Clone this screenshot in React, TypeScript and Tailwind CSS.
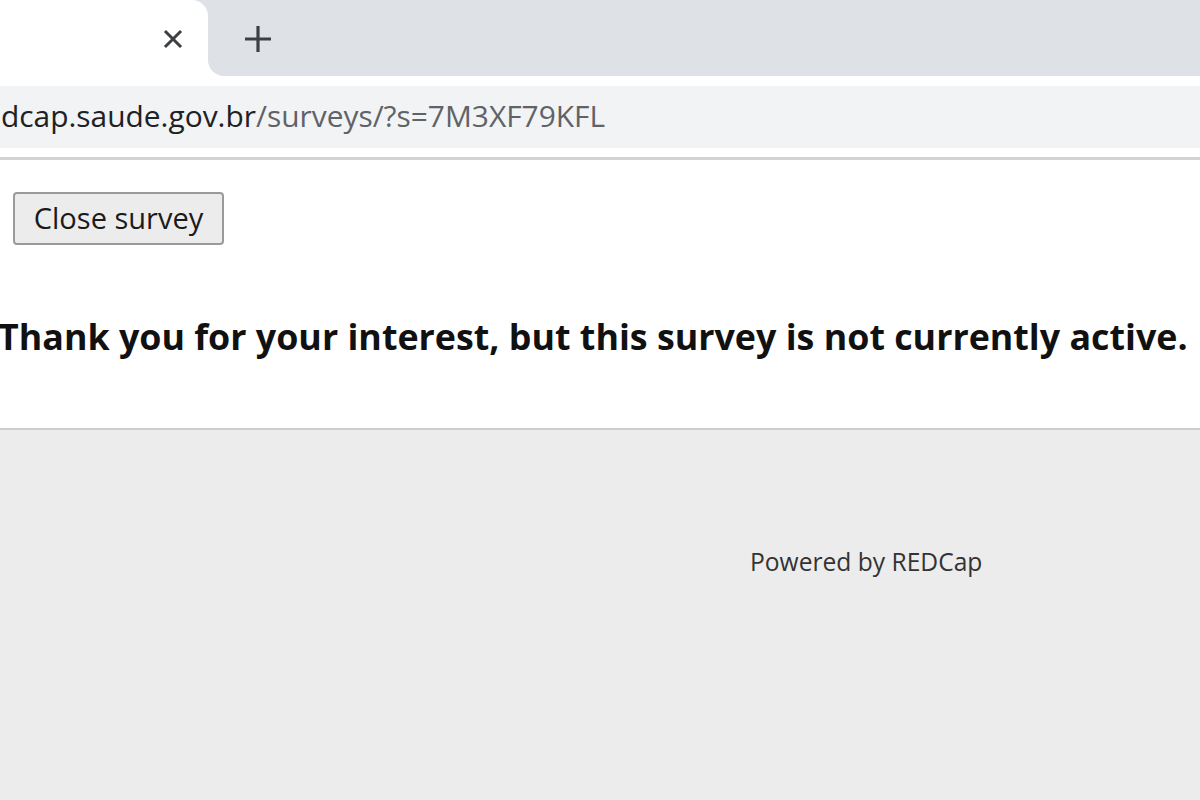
import React from "react";

export default function App() {
  return (
    <div className="w-[1200px] h-[800px] overflow-hidden bg-[#ececec] flex flex-col" style={{ fontFamily: '"Open Sans", "Noto Sans", sans-serif' }}>
      {/* Tab strip */}
      <div className="h-[76px] flex bg-white shrink-0">
        <div className="w-[208px] bg-[#dee1e6] shrink-0">
          <div className="h-full bg-white rounded-tr-[16px] flex items-center justify-end pr-[24px]">
            <svg width="22" height="22" viewBox="0 0 22 22" className="mt-[2px]">
              <path d="M4 4 L18 18 M18 4 L4 18" stroke="#3c4043" strokeWidth="3" strokeLinecap="square" />
            </svg>
          </div>
        </div>
        <div className="flex-1 bg-[#dee1e6] rounded-bl-[16px] flex items-center pl-[35px]">
          <svg width="30" height="30" viewBox="0 0 30 30" className="mt-[1px]">
            <path d="M15 2 V28 M2 15 H28" stroke="#3c4043" strokeWidth="3.2" />
          </svg>
        </div>
      </div>
      {/* Toolbar */}
      <div className="bg-white pt-[10px] pb-[9px] shrink-0">
        <div className="h-[62px] bg-[#f1f3f4] flex items-center">
          <span className="text-[29.9px] leading-none whitespace-nowrap pl-[1px] -mt-[2px]" style={{ fontFamily: '"Open Sans", sans-serif' }}>
            <span className="text-[#202124]">dcap.saude.gov.br</span>
            <span className="text-[#5f6368]">/surveys/?s=7M3XF79KFL</span>
          </span>
        </div>
      </div>
      <div className="h-[3px] bg-[#d2d3d5] shrink-0" />
      {/* Page content */}
      <div className="bg-white h-[270px] shrink-0 border-b-2 border-[#cdcdcd] pt-[32px]">
        <button className="ml-[13px] h-[53px] w-[211px] bg-[#ececec] border-2 border-[#9a9a9a] rounded-[4px] text-[29px] text-[#1a1a1a] leading-none pb-[2px]">
          Close survey
        </button>
        <div className="mt-[74px] -ml-[2px] text-[35.8px] font-bold text-[#111] whitespace-nowrap leading-none">
          Thank you for your interest, but this survey is not currently active.
        </div>
      </div>
      {/* Footer area */}
      <div className="flex-1 pt-[120px] pl-[750px]">
        <div className="text-[24.6px] text-[#333] leading-none whitespace-nowrap">Powered by REDCap</div>
      </div>
    </div>
  );
}
